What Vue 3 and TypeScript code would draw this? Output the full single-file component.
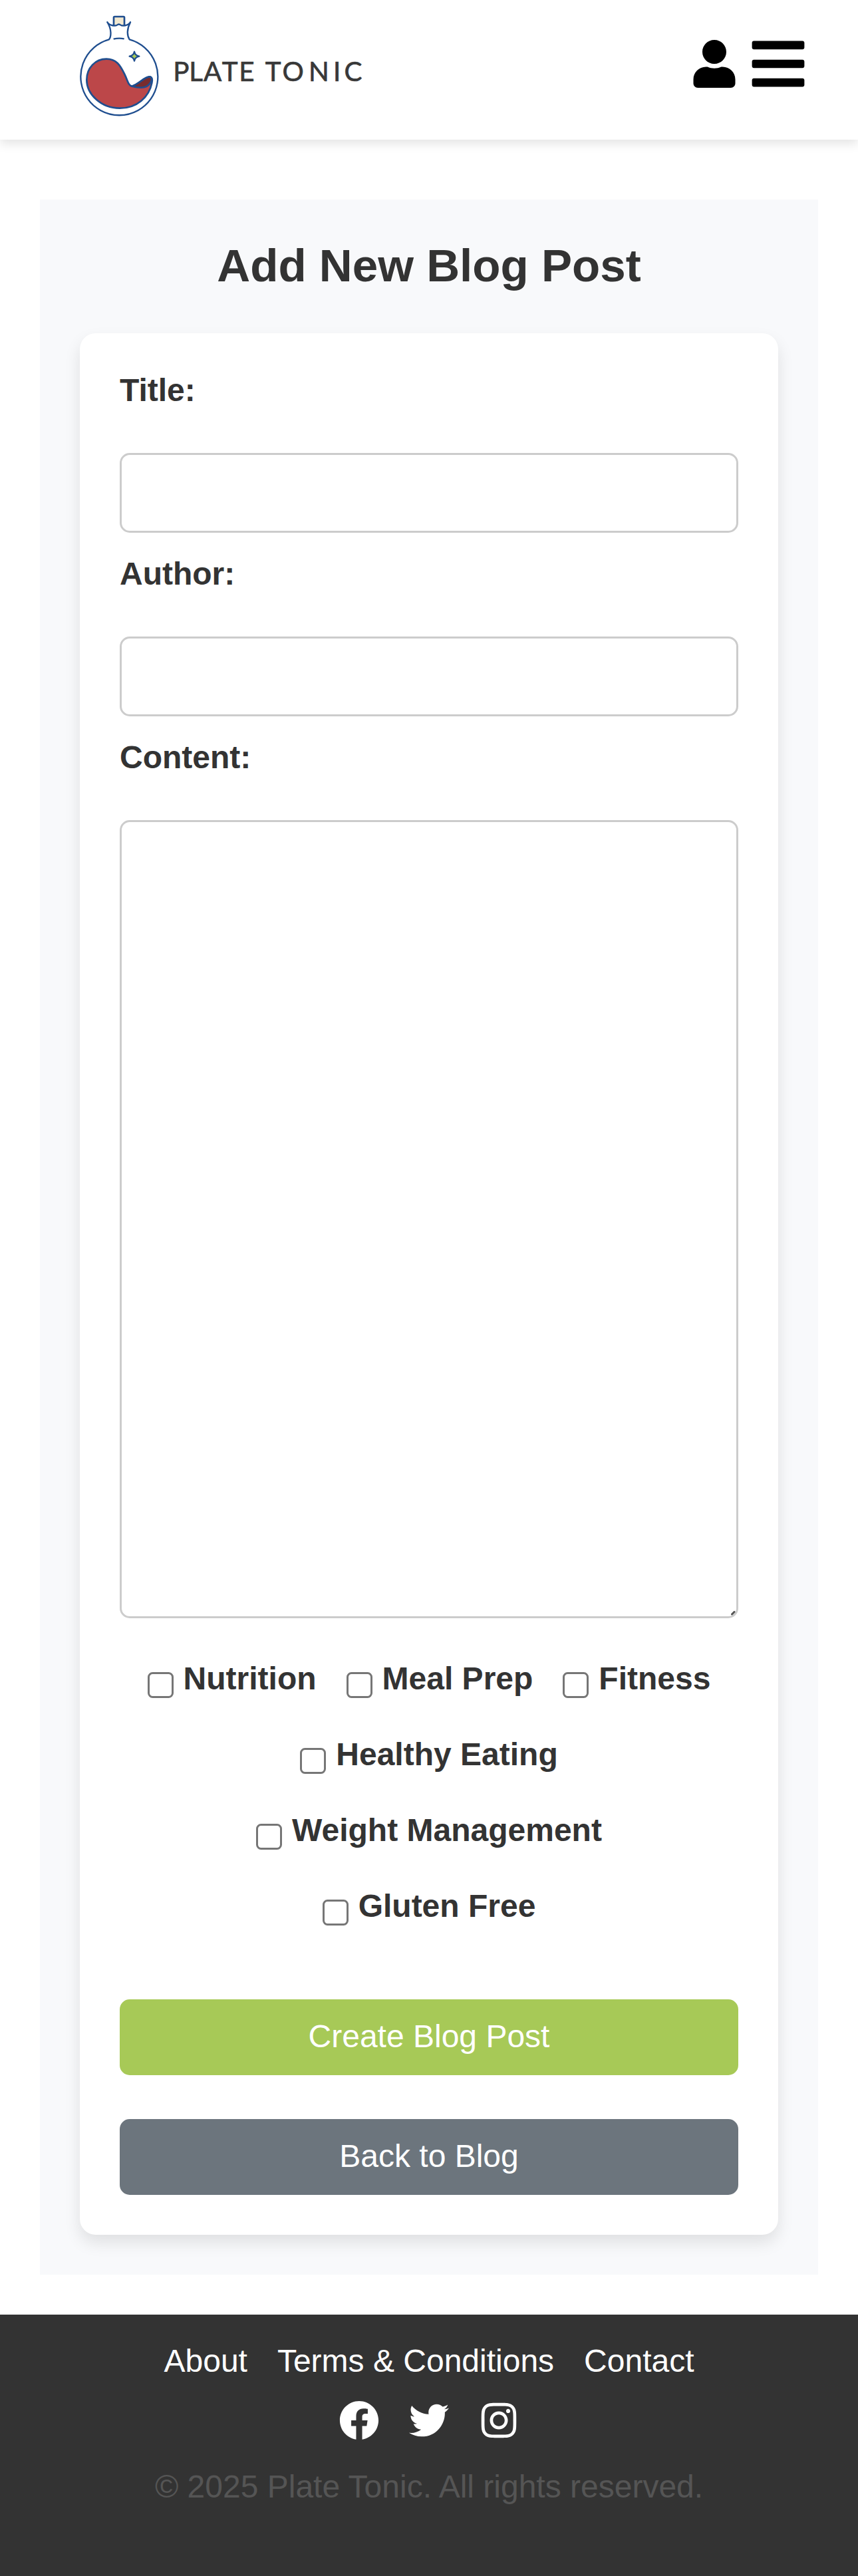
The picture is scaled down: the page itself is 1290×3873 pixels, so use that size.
<script setup lang="ts">
import { reactive, ref } from 'vue'

const post = reactive({ title: '', author: '', content: '' })
const categories: string[] = [
  'Nutrition',
  'Meal Prep',
  'Fitness',
  'Healthy Eating',
  'Weight Management',
  'Gluten Free',
]
const selected = ref<string[]>([])
const footerLinks: string[] = ['About', 'Terms & Conditions', 'Contact']
</script>

<template>
  <div class="page">
    <header class="header">
      <a class="logo" aria-label="Plate Tonic">
        <svg width="424" height="160" viewBox="60 60 1272 480">
          <rect x="213" y="75" width="48" height="42" rx="4" class="cork" />
          <path
            class="glass"
            d="M192 178C202 165 204 130 184 100C194 116 220 119 228 113Q236 106 244 113C252 119 278 116 288 100C272 130 272 160 284 178A174 174 0 1 1 192 178Z"
          />
          <path class="line" d="M212 176Q236 170 260 175" />
          <path
            class="liquid"
            d="M180 266C225 266 242 294 262 335C277 366 279 386 295 389C330 380 350 346 375 346C388 348 388 362 385 374C372 438 318 488 240 488C154 488 91 424 91 360C91 306 130 266 180 266Z"
          />
          <path
            class="fold"
            d="M295 389C330 378 350 346 375 346C386 348 386 360 380 370C366 396 340 401 295 389Z"
          />
          <path class="star" d="M306 233Q309 250 328 254Q309 258 306 275Q303 258 284 254Q303 250 306 233Z" />
          <text class="wordmark" y="366" x="517 584 659 737 813 932 1022 1138 1220 1293">PLATETONIC</text>
        </svg>
      </a>
      <nav class="actions">
        <svg class="user" viewBox="0 0 448 512">
          <path
            d="M224 256c70.7 0 128-57.3 128-128S294.7 0 224 0 96 57.3 96 128s57.3 128 128 128zm89.6 32h-16.7c-22.2 10.2-46.9 16-72.9 16s-50.6-5.8-72.9-16h-16.7C60.2 288 0 348.2 0 422.4V464c0 26.5 21.5 48 48 48h352c26.5 0 48-21.5 48-48v-41.6c0-74.2-60.2-134.4-134.4-134.4z"
          />
        </svg>
        <svg class="bars" viewBox="0 0 448 512">
          <path
            d="M16 132h416c8.837 0 16-7.163 16-16V76c0-8.837-7.163-16-16-16H16C7.163 60 0 67.163 0 76v40c0 8.837 7.163 16 16 16zm0 160h416c8.837 0 16-7.163 16-16v-40c0-8.837-7.163-16-16-16H16c-8.837 0-16 7.163-16 16v40c0 8.837 7.163 16 16 16zm0 160h416c8.837 0 16-7.163 16-16v-40c0-8.837-7.163-16-16-16H16c-8.837 0-16 7.163-16 16v40c0 8.837 7.163 16 16 16z"
          />
        </svg>
      </nav>
    </header>

    <main class="section">
      <h2>Add New Blog Post</h2>
      <form class="card" @submit.prevent>
        <label class="field-label" for="title">Title:</label>
        <input id="title" v-model="post.title" class="field" type="text" />
        <label class="field-label" for="author">Author:</label>
        <input id="author" v-model="post.author" class="field" type="text" />
        <label class="field-label" for="content">Content:</label>
        <div class="area">
          <textarea id="content" v-model="post.content" class="field"></textarea>
          <svg class="grip" width="7" height="7" viewBox="0 0 7 7"><path d="M1.5 5L5 1.5" /></svg>
        </div>
        <div class="categories">
          <label v-for="name in categories" :key="name" class="category">
            <input v-model="selected" type="checkbox" :value="name" />
            <span>{{ name }}</span>
          </label>
        </div>
        <button class="btn primary" type="submit">Create Blog Post</button>
        <button class="btn secondary" type="button">Back to Blog</button>
      </form>
    </main>

    <footer class="footer">
      <nav class="links">
        <a v-for="link in footerLinks" :key="link">{{ link }}</a>
      </nav>
      <div class="social">
        <svg viewBox="0 0 512 512">
          <path
            d="M504 256C504 119 393 8 256 8S8 119 8 256c0 123.78 90.69 226.38 209.25 245V327.69h-63V256h63v-54.64c0-62.15 37-96.48 93.67-96.48 27.14 0 55.52 4.84 55.52 4.84v61h-31.28c-30.8 0-40.41 19.12-40.41 38.73V256h68.78l-11 71.69h-57.78V501C413.31 482.38 504 379.78 504 256z"
          />
        </svg>
        <svg viewBox="0 0 512 512">
          <path
            d="M459.37 151.716c.325 4.548.325 9.097.325 13.645 0 138.72-105.583 298.558-298.558 298.558-59.452 0-114.68-17.219-161.137-47.106 8.447.974 16.568 1.299 25.34 1.299 49.055 0 94.213-16.568 130.274-44.832-46.132-.975-84.792-31.188-98.112-72.772 6.498.974 12.995 1.624 19.818 1.624 9.421 0 18.843-1.3 27.614-3.573-48.081-9.747-84.143-51.98-84.143-102.985v-1.299c13.969 7.797 30.214 12.67 47.431 13.319-28.264-18.843-46.781-51.005-46.781-87.391 0-19.492 5.197-37.36 14.294-52.954 51.655 63.675 129.3 105.258 216.365 109.807-1.624-7.797-2.599-15.918-2.599-24.04 0-57.828 46.782-104.934 104.934-104.934 30.213 0 57.502 12.67 76.67 33.137 23.715-4.548 46.456-13.32 66.599-25.34-7.798 24.366-24.366 44.833-46.132 57.827 21.117-2.273 41.584-8.122 60.426-16.243-14.292 20.791-32.161 39.308-52.628 54.253z"
          />
        </svg>
        <svg viewBox="0 0 448 512">
          <path
            d="M224.1 141c-63.6 0-114.9 51.3-114.9 114.9s51.3 114.9 114.9 114.9S339 319.5 339 255.9 287.7 141 224.1 141zm0 189.6c-41.1 0-74.7-33.5-74.7-74.7s33.5-74.7 74.7-74.7 74.7 33.5 74.7 74.7-33.6 74.7-74.7 74.7zm146.4-194.3c0 14.9-12 26.8-26.8 26.8-14.9 0-26.8-12-26.8-26.8s12-26.8 26.8-26.8 26.8 12 26.8 26.8zm76.1 27.2c-1.7-35.9-9.9-67.7-36.2-93.9-26.2-26.2-58-34.4-93.9-36.2-37-2.1-147.9-2.1-184.9 0-35.8 1.7-67.6 9.9-93.9 36.1s-34.4 58-36.2 93.9c-2.1 37-2.1 147.9 0 184.9 1.7 35.9 9.9 67.7 36.2 93.9s58 34.4 93.9 36.2c37 2.1 147.9 2.1 184.9 0 35.9-1.7 67.7-9.9 93.9-36.2 26.2-26.2 34.4-58 36.2-93.9 2.1-37 2.1-147.8 0-184.8zM398.8 388c-7.8 19.6-22.9 34.7-42.6 42.6-29.5 11.7-99.5 9-132.1 9s-102.7 2.6-132.1-9c-19.6-7.8-34.7-22.9-42.6-42.6-11.7-29.5-9-99.5-9-132.1s-2.6-102.7 9-132.1c7.8-19.6 22.9-34.7 42.6-42.6 29.5-11.7 99.5-9 132.1-9s102.7-2.6 132.1 9c19.6 7.8 34.7 22.9 42.6 42.6 11.7 29.5 9 99.5 9 132.1s2.7 102.7-9 132.1z"
          />
        </svg>
      </div>
      <p>© 2025 Plate Tonic. All rights reserved.</p>
    </footer>
  </div>
</template>

<style>
body {
  margin: 0;
  background: #fff;
}
</style>

<style scoped>
.page {
  width: 1290px;
  font-family: 'Liberation Sans', Arial, sans-serif;
  font-size: 48px;
  color: #333;
}
.page * {
  box-sizing: border-box;
}
.header {
  display: flex;
  justify-content: space-between;
  align-items: flex-start;
  height: 210px;
  padding: 20px 75px 0 120px;
  background: #fff;
  box-shadow: 0 6px 15px rgba(0, 0, 0, 0.11);
}
.logo svg {
  display: block;
}
.cork {
  fill: #f2e8cf;
  stroke: #1f4e8f;
  stroke-width: 8;
}
.glass {
  fill: #fff;
  stroke: #1f4e8f;
  stroke-width: 7;
  stroke-linejoin: round;
}
.line {
  fill: none;
  stroke: #1f4e8f;
  stroke-width: 7;
}
.liquid {
  fill: #bc4749;
  stroke: #1f4e8f;
  stroke-width: 8;
}
.fold {
  fill: #782c2e;
  stroke: #1f4e8f;
  stroke-width: 8;
  stroke-linejoin: round;
}
.star {
  fill: #a7c957;
  stroke: #1f4e8f;
  stroke-width: 7;
  stroke-linejoin: round;
}
.wordmark {
  font-family: Lato, 'Open Sans', sans-serif;
  font-size: 121px;
  text-anchor: middle;
  fill: #383838;
  stroke: #383838;
  stroke-width: 2;
}
.actions {
  display: flex;
  align-items: center;
  gap: 15px;
  margin-top: 31px;
}
.user {
  width: 72px;
  height: 72px;
}
.bars {
  width: 90px;
  height: 90px;
}
.section {
  margin: 90px 60px 60px;
  padding: 60px;
  background: #f8f9fb;
}
h2 {
  margin: 0 0 63px;
  font-size: 69.12px;
  line-height: 78px;
  text-align: center;
}
.card {
  display: flex;
  flex-direction: column;
  height: 2859px;
  padding: 60px;
  background: #fff;
  border-radius: 24px;
  box-shadow: 0 12px 24px rgba(0, 0, 0, 0.1);
}
.field-label {
  height: 120px;
  font-weight: bold;
  line-height: 51px;
}
.field {
  display: block;
  flex: none;
  width: 100%;
  height: 120px;
  margin: 0 0 36px;
  padding: 30px;
  border: 3px solid #ccc;
  border-radius: 15px;
  background: #fff;
  font: inherit;
  outline: none;
}
.area {
  position: relative;
}
.area .field {
  height: 1200px;
  margin: 0;
  resize: none;
}
.grip {
  position: absolute;
  right: 4px;
  bottom: 4px;
}
.grip path {
  stroke: #555;
  stroke-width: 3;
  stroke-linecap: round;
}
.categories {
  display: flex;
  flex-wrap: wrap;
  justify-content: center;
  gap: 60px 45px;
  margin: 64px 0 113px;
  padding: 0 30px;
}
.category {
  display: flex;
  align-items: flex-start;
  gap: 15px;
  height: 54px;
  font-weight: bold;
  line-height: 54px;
}
.category input {
  appearance: none;
  width: 39px;
  height: 39px;
  margin: 17px 0 0;
  border: 3px solid #767676;
  border-radius: 7.5px;
  background: #fff;
}
.btn {
  flex: none;
  height: 114px;
  padding: 0 0 2px;
  border: 0;
  border-radius: 15px;
  color: #fff;
  font: inherit;
  line-height: 112px;
}
.primary {
  margin-bottom: 66px;
  background: #a7c957;
}
.secondary {
  background: #6c757d;
}
.footer {
  height: 393px;
  padding-top: 43px;
  background: #333;
  line-height: 54px;
  text-align: center;
}
.links {
  display: flex;
  justify-content: center;
  gap: 45px;
  color: #fff;
}
.social {
  display: flex;
  justify-content: center;
  gap: 45px;
  margin-top: 32px;
}
.social svg {
  width: 60px;
  height: 60px;
  fill: #fff;
}
.footer p {
  margin: 43px 0 0;
  color: #555;
}
</style>
